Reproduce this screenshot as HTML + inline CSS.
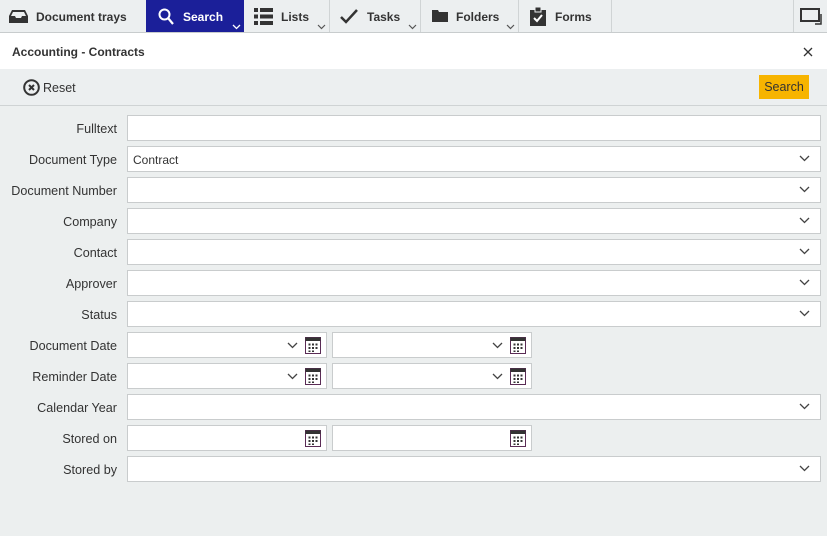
<!DOCTYPE html><html><head><style>
body{margin:0;width:827px;height:536px;overflow:hidden;background:#ecefef;font-family:"Liberation Sans",sans-serif;font-size:12px;color:#333;position:relative}
.top{position:absolute;left:0;top:0;width:827px;height:32px;background:#eceff0;border-bottom:1px solid #c8cccd}
.tab{position:absolute;top:0;height:32px;font-weight:bold;font-size:12px;color:#333;border-right:1px solid #d0d4d5;box-sizing:border-box}
.tab span{position:absolute;top:10px}
.tab svg{position:absolute}
.car{position:absolute;bottom:2px;right:3px}
.hdr{position:absolute;left:0;top:33px;width:827px;height:36px;background:#fff}
.tb{position:absolute;left:0;top:69px;width:827px;height:36px;background:#eceff0;border-bottom:1px solid #cfd3d4}
.lbl{position:absolute;right:710px;text-align:right;font-size:12.6px;color:#333;margin-top:1px}
.in{position:absolute;height:26px;background:#fff;border:1px solid #c9cccd;box-sizing:border-box;font-size:12px;padding:6px 5px}
.dd{position:absolute;right:10px;top:8px}
</style></head><body>
<div class="top">
 <div class="tab" style="left:0;width:146px;border:none"><svg style="left:9px;top:9px" width="19" height="15" viewBox="0 0 19 15"><path d="M3 1h13l3 6v7H0V7z" fill="#333"/><path d="M4 3h11l2 4h-4l-1 2H7L6 7H2z" fill="#eceff0"/></svg><span style="left:36px">Document trays</span></div>
 <div class="tab" style="left:146px;width:98px;background:#1b1f99;color:#fff;border:none"><svg style="left:12px;top:8px" width="16" height="17" viewBox="0 0 16 17"><circle cx="6.5" cy="6.5" r="5" fill="none" stroke="#fff" stroke-width="2"/><path d="M10 10l5 6" stroke="#fff" stroke-width="2.2"/></svg><span style="left:37px">Search</span><svg class="car" width="9" height="6" viewBox="0 0 9 6"><path d="M1 1l3.5 3.5L8 1" fill="none" stroke="#fff" stroke-width="1.3"/></svg></div>
 <div class="tab" style="left:244px;width:86px"><svg style="left:10px;top:8px" width="19" height="17" viewBox="0 0 19 17"><g fill="#333"><rect x="0" y="0" width="4" height="4"/><rect x="6" y="0" width="13" height="4"/><rect x="0" y="6.5" width="4" height="4"/><rect x="6" y="6.5" width="13" height="4"/><rect x="0" y="13" width="4" height="4"/><rect x="6" y="13" width="13" height="4"/></g></svg><span style="left:37px">Lists</span><svg class="car" width="9" height="6" viewBox="0 0 9 6"><path d="M1 1l3.5 3.5L8 1" fill="none" stroke="#555" stroke-width="1.2"/></svg></div>
 <div class="tab" style="left:330px;width:91px"><svg style="left:10px;top:9px" width="18" height="15" viewBox="0 0 18 15"><path d="M1 8l5 5L17 1" fill="none" stroke="#333" stroke-width="2.5"/></svg><span style="left:37px">Tasks</span><svg class="car" width="9" height="6" viewBox="0 0 9 6"><path d="M1 1l3.5 3.5L8 1" fill="none" stroke="#555" stroke-width="1.2"/></svg></div>
 <div class="tab" style="left:421px;width:98px"><svg style="left:11px;top:10px" width="16" height="12" viewBox="0 0 16 12"><path d="M0 0h6l1 2h9v10H0z" fill="#333"/></svg><span style="left:35px">Folders</span><svg class="car" width="9" height="6" viewBox="0 0 9 6"><path d="M1 1l3.5 3.5L8 1" fill="none" stroke="#555" stroke-width="1.2"/></svg></div>
 <div class="tab" style="left:519px;width:93px"><svg style="left:11px;top:7px" width="16" height="19" viewBox="0 0 16 19"><rect x="0" y="3" width="16" height="16" fill="#333"/><rect x="5" y="0" width="6" height="5" fill="#333" stroke="#eceff0" stroke-width="1"/><path d="M4 11l3 3 5-6" fill="none" stroke="#fff" stroke-width="2"/></svg><span style="left:36px">Forms</span></div>
 <div class="tab" style="left:793px;width:34px;border-left:1px solid #d0d4d5;border-right:none"><svg style="left:6px;top:8px" width="22" height="17" viewBox="0 0 22 17"><rect x="1" y="1" width="18" height="12" fill="none" stroke="#333" stroke-width="2"/><path d="M21 6v10h-6" fill="none" stroke="#333" stroke-width="1.5"/></svg></div>
</div>
<div class="hdr"><div style="position:absolute;left:12px;top:12px;font-weight:bold;font-size:12px">Accounting - Contracts</div><svg style="position:absolute;left:803px;top:14px" width="10" height="10" viewBox="0 0 10 10"><path d="M1 1l8 8M9 1l-8 8" stroke="#333" stroke-width="1.3"/></svg></div>
<div class="tb"><svg style="position:absolute;left:23px;top:10px" width="17" height="17" viewBox="0 0 17 17"><circle cx="8.5" cy="8.5" r="7.3" fill="none" stroke="#333" stroke-width="2"/><path d="M6 6l5 5M11 6l-5 5" stroke="#333" stroke-width="2"/></svg><div style="position:absolute;left:43px;top:12px;font-size:12.5px">Reset</div><div style="position:absolute;left:759px;top:6px;width:50px;height:24px;background:#f7b400;font-size:12.5px;line-height:24px;text-align:center;color:#333">Search</div></div>
<svg width="0" height="0" style="position:absolute"><defs><g id="c"><path d="M1 1l4.5 4.5L10 1" fill="none" stroke="#444" stroke-width="1.3"/></g><g id="k"><rect x="0" y="0" width="15" height="16" fill="#fff" stroke="#5a2b55" stroke-width="1"/><rect x="0" y="0" width="15" height="3.5" fill="#333"/><g fill="#333"><rect x="3" y="6" width="2" height="2"/><rect x="6.5" y="6" width="2" height="2"/><rect x="10" y="6" width="2" height="2"/><rect x="3" y="9.5" width="2" height="2"/><rect x="6.5" y="9.5" width="2" height="2"/><rect x="10" y="9.5" width="2" height="2"/><rect x="3" y="13" width="2" height="1.5"/><rect x="6.5" y="13" width="2" height="1.5"/></g></g></defs></svg>
<div class="lbl" style="top:121px">Fulltext</div><div class="in" style="left:127px;top:115px;width:694px"></div>
<div class="lbl" style="top:152px">Document Type</div><div class="in" style="left:127px;top:146px;width:694px">Contract<svg class="dd" width="11" height="7"><use href="#c"/></svg></div>
<div class="lbl" style="top:183px">Document Number</div><div class="in" style="left:127px;top:177px;width:694px"><svg class="dd" width="11" height="7"><use href="#c"/></svg></div>
<div class="lbl" style="top:214px">Company</div><div class="in" style="left:127px;top:208px;width:694px"><svg class="dd" width="11" height="7"><use href="#c"/></svg></div>
<div class="lbl" style="top:245px">Contact</div><div class="in" style="left:127px;top:239px;width:694px"><svg class="dd" width="11" height="7"><use href="#c"/></svg></div>
<div class="lbl" style="top:276px">Approver</div><div class="in" style="left:127px;top:270px;width:694px"><svg class="dd" width="11" height="7"><use href="#c"/></svg></div>
<div class="lbl" style="top:307px">Status</div><div class="in" style="left:127px;top:301px;width:694px"><svg class="dd" width="11" height="7"><use href="#c"/></svg></div>
<div class="lbl" style="top:338px">Document Date</div>
<div class="in" style="left:127px;top:332px;width:200px"><svg style="position:absolute;left:159px;top:9px" width="11" height="7"><use href="#c"/></svg><svg style="position:absolute;left:177px;top:4px" width="16" height="17"><use href="#k" transform="translate(.5,.5)"/></svg></div>
<div class="in" style="left:332px;top:332px;width:200px"><svg style="position:absolute;left:159px;top:9px" width="11" height="7"><use href="#c"/></svg><svg style="position:absolute;left:177px;top:4px" width="16" height="17"><use href="#k" transform="translate(.5,.5)"/></svg></div>
<div class="lbl" style="top:369px">Reminder Date</div>
<div class="in" style="left:127px;top:363px;width:200px"><svg style="position:absolute;left:159px;top:9px" width="11" height="7"><use href="#c"/></svg><svg style="position:absolute;left:177px;top:4px" width="16" height="17"><use href="#k" transform="translate(.5,.5)"/></svg></div>
<div class="in" style="left:332px;top:363px;width:200px"><svg style="position:absolute;left:159px;top:9px" width="11" height="7"><use href="#c"/></svg><svg style="position:absolute;left:177px;top:4px" width="16" height="17"><use href="#k" transform="translate(.5,.5)"/></svg></div>
<div class="lbl" style="top:400px">Calendar Year</div><div class="in" style="left:127px;top:394px;width:694px"><svg class="dd" width="11" height="7"><use href="#c"/></svg></div>
<div class="lbl" style="top:431px">Stored on</div>
<div class="in" style="left:127px;top:425px;width:200px"><svg style="position:absolute;left:177px;top:4px" width="16" height="17"><use href="#k" transform="translate(.5,.5)"/></svg></div>
<div class="in" style="left:332px;top:425px;width:200px"><svg style="position:absolute;left:177px;top:4px" width="16" height="17"><use href="#k" transform="translate(.5,.5)"/></svg></div>
<div class="lbl" style="top:462px">Stored by</div><div class="in" style="left:127px;top:456px;width:694px"><svg class="dd" width="11" height="7"><use href="#c"/></svg></div>
</body></html>
